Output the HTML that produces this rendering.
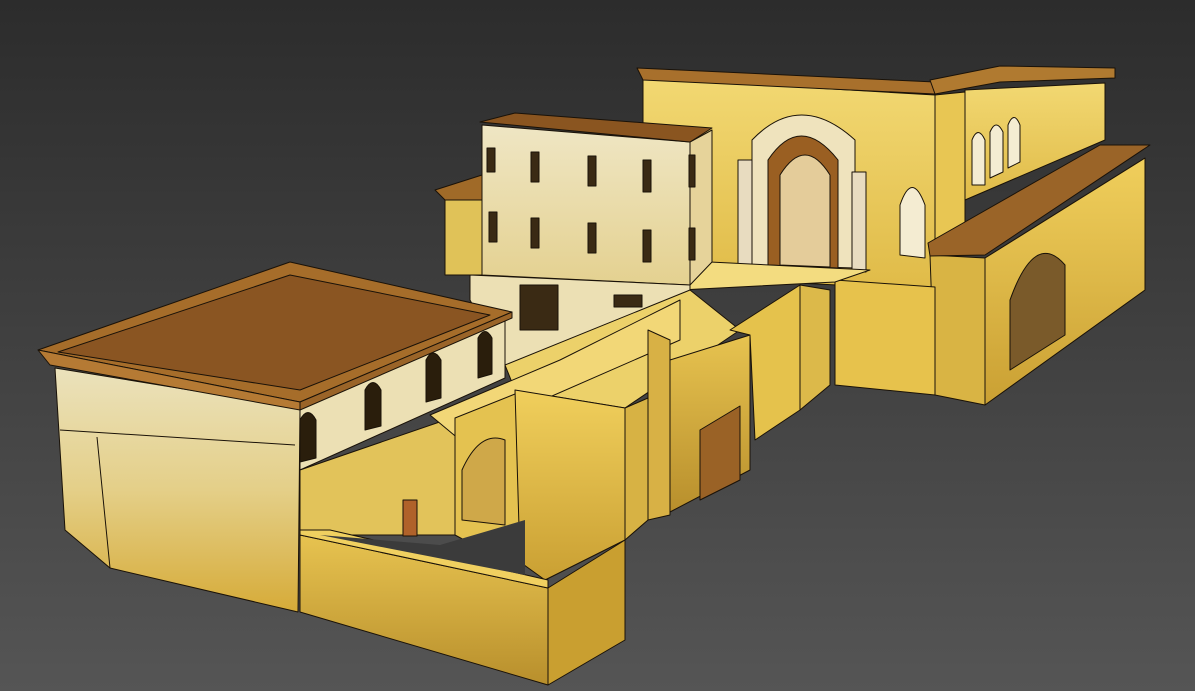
<!DOCTYPE html>
<html><head><meta charset="utf-8"><style>
html,body{margin:0;padding:0;background:#3a3a3a;}
svg{display:block}
</style></head><body>
<svg width="1195" height="691" viewBox="0 0 1195 691" xmlns="http://www.w3.org/2000/svg">
<defs>
<linearGradient id="bg" x1="0" y1="0" x2="0" y2="1"><stop offset="0" stop-color="#2c2c2c"/><stop offset="1" stop-color="#555"/></linearGradient>
<linearGradient id="cream" x1="0" y1="0" x2="0" y2="1"><stop offset="0" stop-color="#ebe2bc"/><stop offset="0.5" stop-color="#e4cf88"/><stop offset="1" stop-color="#d6ab38"/></linearGradient>
<linearGradient id="yel" x1="0" y1="0" x2="0" y2="1"><stop offset="0" stop-color="#f0cf5c"/><stop offset="1" stop-color="#caa033"/></linearGradient>
<linearGradient id="yel2" x1="0" y1="0" x2="0" y2="1"><stop offset="0" stop-color="#e7c350"/><stop offset="1" stop-color="#b88f2c"/></linearGradient>
<linearGradient id="tall" x1="0" y1="0" x2="0" y2="1"><stop offset="0" stop-color="#efe6c4"/><stop offset="1" stop-color="#e4d190"/></linearGradient>
<linearGradient id="back" x1="0" y1="0" x2="0" y2="1"><stop offset="0" stop-color="#f2d872"/><stop offset="1" stop-color="#e0bb48"/></linearGradient>
</defs>
<rect width="1195" height="691" fill="url(#bg)"/>
<g stroke="#1a1208" stroke-width="1" stroke-linejoin="round">
<!-- back building -->
<polygon points="643,78 935,95 935,290 643,275" fill="url(#back)"/>
<polygon points="935,95 965,92 965,250 935,258" fill="#e8c653"/>
<polygon points="965,90 1105,83 1105,140 965,200" fill="url(#back)"/>
<polygon points="637,68 935,82 935,94 643,80" fill="#a8702c"/>
<polygon points="930,80 1000,66 1115,68 1115,78 1000,82 935,94" fill="#b07a30"/>
<path d="M752,265 L752,140 Q800,90 855,140 L855,268 Z" fill="#efe3bd"/>
<path d="M768,265 L768,160 Q800,112 838,160 L838,268 Z" fill="#9a5f22"/>
<path d="M780,265 L780,175 Q805,135 830,175 L830,267 Z" fill="#e4cc9a"/>
<rect x="738" y="160" width="14" height="108" fill="#e8dcc0"/>
<rect x="852" y="172" width="14" height="100" fill="#e8dcc0"/>
<path d="M900,255 L900,205 Q912,170 925,205 L925,258 Z" fill="#f4ecd2"/>
<path d="M972,185 L972,140 Q978,125 985,140 L985,185 Z M990,178 L990,132 Q996,118 1003,132 L1003,172Z M1008,168 L1008,125 Q1014,110 1020,125 L1020,162Z" fill="#f4ecd2"/>
<!-- right long wall -->
<polygon points="930,255 985,258 985,405 935,395" fill="#d9b444"/>
<polygon points="985,258 1145,158 1145,290 985,405" fill="url(#yel)"/>
<polygon points="928,243 1100,145 1150,145 985,255 930,256" fill="#9a6428"/>
<path d="M1010,370 L1010,300 Q1035,230 1065,265 L1065,335 Z" fill="#7a5a2a"/>
<polygon points="835,280 935,287 935,395 835,385" fill="#e7c24c"/>
<polygon points="710,262 870,270 835,282 680,290" fill="#f3dc80"/>
<!-- tall building -->
<polygon points="482,125 690,142 690,285 482,275" fill="url(#tall)"/>
<polygon points="690,142 712,130 712,262 690,285" fill="#e6d39a"/>
<polygon points="480,122 515,113 712,128 690,142" fill="#8a5520"/>
<polygon points="435,190 482,175 482,200 445,200" fill="#a06a28"/>
<polygon points="445,200 482,200 482,275 445,275" fill="#e0c258"/>
<!-- lower facade under tall building -->
<polygon points="470,275 690,285 690,300 560,360 505,365 470,300" fill="#ece0b4"/>
<polygon points="505,365 690,290 740,330 625,408 515,390" fill="#ecd16a"/>
<g fill="#3a2a14">
<rect x="487" y="148" width="8" height="24"/><rect x="531" y="152" width="8" height="30"/><rect x="588" y="156" width="8" height="30"/><rect x="643" y="160" width="8" height="32"/><rect x="689" y="155" width="6" height="32"/>
<rect x="489" y="212" width="8" height="30"/><rect x="531" y="218" width="8" height="30"/><rect x="588" y="223" width="8" height="30"/><rect x="643" y="230" width="8" height="32"/><rect x="689" y="228" width="6" height="32"/>
<rect x="520" y="285" width="38" height="45"/><rect x="614" y="295" width="28" height="12"/>
</g>
<!-- left building -->
<polygon points="55,368 300,408 298,612 110,568 65,530" fill="url(#cream)"/>
<polygon points="300,408 505,318 505,378 300,470" fill="#ece0b4"/>
<polygon points="38,350 290,262 512,312 300,402" fill="#a66d2a"/>
<polygon points="58,352 290,275 490,315 300,390" fill="#8a5522"/>
<polygon points="38,350 300,402 300,410 50,365" fill="#b57a34"/>
<polygon points="300,402 512,312 512,318 300,410" fill="#9a6428"/>
<line x1="97" y1="437" x2="110" y2="568"/>
<line x1="60" y1="430" x2="295" y2="445"/>
<g fill="#2a1e0c">
<path d="M300,462 L300,420 Q308,405 316,420 L316,458Z"/><path d="M365,430 L365,390 Q373,375 381,390 L381,426Z"/><path d="M426,402 L426,360 Q433,346 441,360 L441,398Z"/><path d="M478,378 L478,338 Q485,325 492,338 L492,374Z"/>
</g>
<!-- courtyard walls -->
<polygon points="300,470 460,415 460,535 300,535" fill="#e2c35a"/>
<polygon points="430,415 560,360 680,300 680,340 520,410 460,440" fill="#f2d777"/>
<polygon points="455,418 520,392 520,570 455,535" fill="#e4c250"/>
<path d="M462,520 L462,470 Q480,430 505,440 L505,525Z" fill="#cfa849"/>
<polygon points="515,390 625,408 625,540 545,580 520,562" fill="url(#yel)"/>
<polygon points="625,408 648,398 648,520 625,540" fill="#d7b244"/>
<polygon points="648,330 670,340 670,515 648,520" fill="#d8b145"/>
<polygon points="670,360 750,335 750,470 670,512" fill="url(#yel2)"/>
<polygon points="700,430 740,406 740,480 700,500" fill="#9a6226"/>
<polygon points="730,330 800,285 800,410 755,440 750,335" fill="#e5c24c"/>
<polygon points="800,285 830,290 830,385 800,410" fill="#dcb94a"/>
<!-- front wall -->
<polygon points="300,535 548,588 548,685 300,612" fill="url(#yel2)"/>
<polygon points="548,588 625,540 625,640 548,685" fill="#c99f30"/>
<polygon points="300,530 330,530 548,580 548,588 300,535" fill="#f0d060"/>
<polygon points="320,535 440,545 525,520 525,575" fill="#3b3b3b" stroke="none"/>
<rect x="403" y="500" width="14" height="36" fill="#b0622a"/>
</g>
</svg>
</body></html>
